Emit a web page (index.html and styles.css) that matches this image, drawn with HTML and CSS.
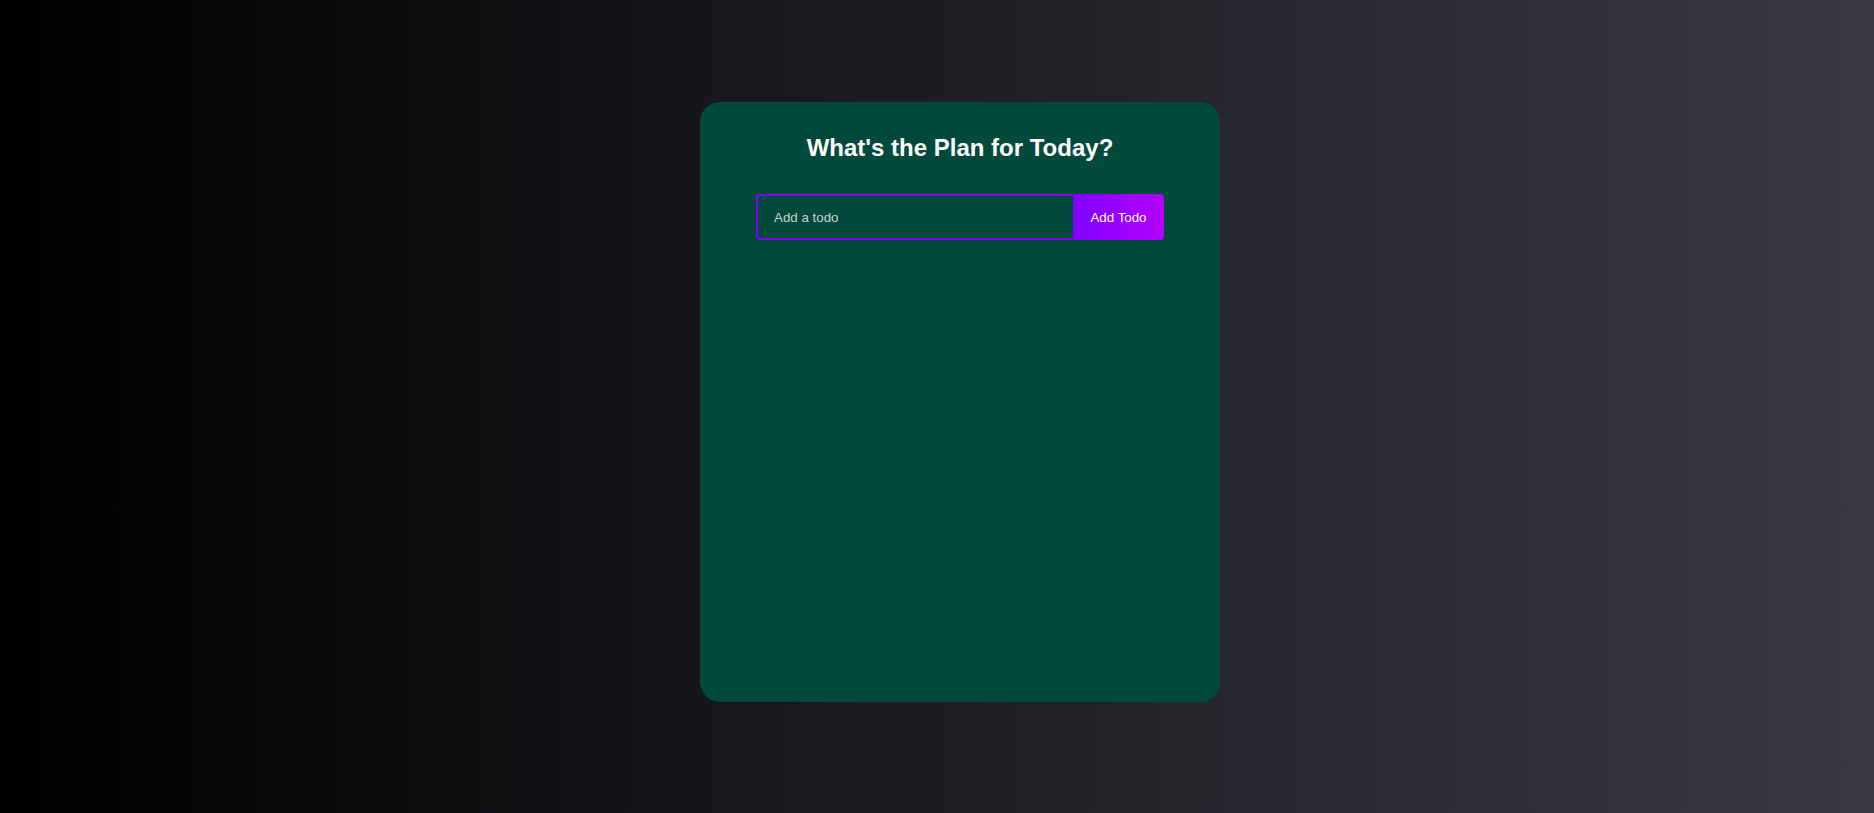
FILE: index.html
```html
<!DOCTYPE html>
<html lang="en">
<head>
<meta charset="utf-8">
<title>Todo App</title>
<link rel="stylesheet" href="styles.css">
</head>
<body>
<main class="page">
  <section class="todo-app">
    <h1 class="todo-title">What's the Plan for Today?</h1>
    <form class="todo-form">
      <input class="todo-input" type="text" placeholder="Add a todo">
      <button class="todo-button" type="button">Add Todo</button>
    </form>
  </section>
</main>
</body>
</html>
```

FILE: styles.css
```css
html, body {
  margin: 0;
  padding: 0;
  height: 100%;
}

body {
  background: linear-gradient(90deg, #000000 0%, #3c3945 100%);
  font-family: "Liberation Sans", Arial, sans-serif;
  overflow: hidden;
}

.page {
  padding: 102px 0 0 700px;
}

.todo-app {
  box-sizing: border-box;
  width: 520px;
  height: 600px;
  background: #014a3b;
  border-radius: 20px;
  padding-top: 32px;
  display: flex;
  flex-direction: column;
  align-items: center;
}

.todo-title {
  margin: 0;
  color: #ffffff;
  font-size: 24px;
  font-weight: bold;
  line-height: 28px;
}

.todo-form {
  display: flex;
  margin-top: 32px;
  width: 408px;
  height: 46px;
}

.todo-input {
  box-sizing: border-box;
  width: 317px;
  height: 46px;
  padding: 0 16px;
  border: 2px solid #8000ff;
  border-right: none;
  border-radius: 4px 0 0 4px;
  background: transparent;
  color: #ffffff;
  font-family: "Liberation Sans", Arial, sans-serif;
  font-size: 13.333px;
  outline: none;
}

.todo-input::placeholder {
  color: #c9d3d0;
}

.todo-button {
  box-sizing: border-box;
  width: 91px;
  height: 46px;
  border: none;
  border-radius: 0 4px 4px 0;
  background: linear-gradient(90deg, #8000ff 0%, #b300ff 100%);
  color: #ffffff;
  font-family: "Liberation Sans", Arial, sans-serif;
  font-size: 13.333px;
  padding: 0;
  cursor: pointer;
}
```
